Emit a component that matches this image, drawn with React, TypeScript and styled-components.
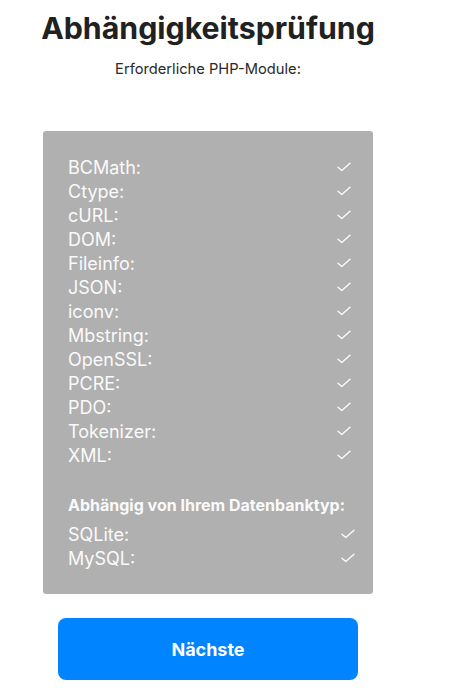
import React from "react";
import styled, { createGlobalStyle } from "styled-components";

const GlobalStyle = createGlobalStyle`
  body {
    margin: 0;
    background: #fff;
    font-family: Inter, "Liberation Sans", sans-serif;
  }
`;

const Page = styled.div`
  width: 330px;
  margin-left: 43px;
  padding-top: 10px;
  display: flex;
  flex-direction: column;
  align-items: center;
`;

const Title = styled.h1`
  margin: 0;
  font-size: 30.3px;
  font-weight: 700;
  line-height: 36px;
  color: #212121;
  white-space: nowrap;
`;

const Subtitle = styled.p`
  margin: 14px 0 0;
  font-size: 14.7px;
  line-height: 18px;
  color: #2a2a2a;
`;

const Panel = styled.div`
  align-self: stretch;
  margin-top: 53px;
  padding: 24px 0 24px 25px;
  background: #b0b0b0;
  border-radius: 3px;
  color: #fafafa;
`;

const List = styled.ul<{ $inset: number }>`
  margin: 0;
  padding: 0 ${(p) => p.$inset}px 0 0;
  list-style: none;
`;

const Row = styled.li`
  display: flex;
  justify-content: space-between;
  align-items: center;
  height: 24px;
  font-size: 18px;
`;

const Group = styled.h3`
  margin: 28px 0 7px;
  font-size: 16px;
  font-weight: 700;
  line-height: 20px;
`;

const Next = styled.button`
  margin-top: 24px;
  width: 300px;
  height: 62px;
  border: none;
  border-radius: 8px;
  background: #0084ff;
  color: #fff;
  font-family: inherit;
  font-size: 18px;
  font-weight: 700;
  cursor: pointer;
`;

const Check = () => (
  <svg width="14" height="10" viewBox="0 0 14 10" fill="none">
    <path d="M1 5.2 L4.8 8.6 L13 1.2" stroke="#fafafa" strokeWidth="1.4" strokeLinecap="round" strokeLinejoin="round" />
  </svg>
);

const modules = [
  "BCMath", "Ctype", "cURL", "DOM", "Fileinfo", "JSON", "iconv",
  "Mbstring", "OpenSSL", "PCRE", "PDO", "Tokenizer", "XML",
];

const databases = ["SQLite", "MySQL"];

export default function App() {
  return (
    <>
      <GlobalStyle />
      <Page>
        <Title>Abhängigkeitsprüfung</Title>
        <Subtitle>Erforderliche PHP-Module:</Subtitle>
        <Panel>
          <List $inset={22}>
            {modules.map((m) => (
              <Row key={m}>
                {m}:
                <Check />
              </Row>
            ))}
          </List>
          <Group>Abhängig von Ihrem Datenbanktyp:</Group>
          <List $inset={18}>
            {databases.map((d) => (
              <Row key={d}>
                {d}:
                <Check />
              </Row>
            ))}
          </List>
        </Panel>
        <Next>Nächste</Next>
      </Page>
    </>
  );
}
